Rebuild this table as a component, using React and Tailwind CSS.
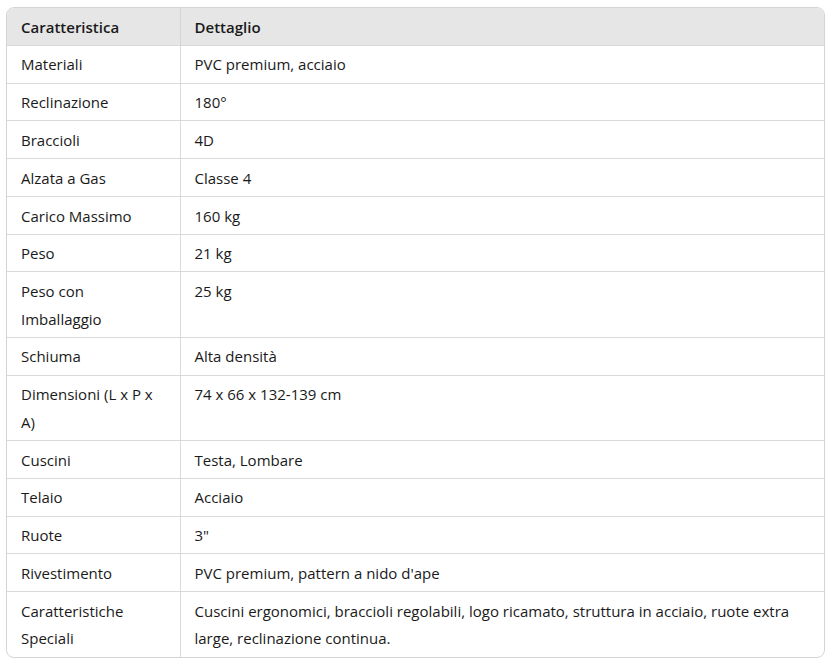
import React from 'react';

const rows = [
  ['Materiali', 'PVC premium, acciaio'],
  ['Reclinazione', '180°'],
  ['Braccioli', '4D'],
  ['Alzata a Gas', 'Classe 4'],
  ['Carico Massimo', '160 kg'],
  ['Peso', '21 kg'],
  ['Peso con Imballaggio', '25 kg'],
  ['Schiuma', 'Alta densità'],
  ['Dimensioni (L x P x A)', '74 x 66 x 132-139 cm'],
  ['Cuscini', 'Testa, Lombare'],
  ['Telaio', 'Acciaio'],
  ['Ruote', '3"'],
  ['Rivestimento', 'PVC premium, pattern a nido d\'ape'],
  [
    'Caratteristiche Speciali',
    'Cuscini ergonomici, braccioli regolabili, logo ricamato, struttura in acciaio, ruote extra large, reclinazione continua.',
  ],
];

const App = () => {
  return (
    <div className="bg-white min-h-[664px] pt-[7px] pl-[6px] pr-[6px] font-['Open_Sans',sans-serif] text-[15px] text-[#1a1a1a]">
      <div className="w-[819px] border border-[#d4d4d4] rounded-lg overflow-hidden">
        <table className="w-full table-fixed border-collapse">
          <thead>
            <tr className="bg-[#e6e6e6]">
              <th className="w-[173px] text-left font-semibold px-[14px] pt-[5.6px] pb-[3.6px] leading-[27.6px] border-r border-[#d4d4d4]">
                Caratteristica
              </th>
              <th className="text-left font-semibold px-[14px] pt-[5.6px] pb-[3.6px] leading-[27.6px]">Dettaglio</th>
            </tr>
          </thead>
          <tbody>
            {rows.map(([k, v]) => (
              <tr key={k} className="border-t border-[#d9d9d9]">
                <td className="align-top px-[14px] pt-[5.6px] pb-[3.6px] leading-[27.6px] border-r border-[#d9d9d9]">{k}</td>
                <td className="align-top px-[14px] pt-[5.6px] pb-[3.6px] leading-[27.6px]">{v}</td>
              </tr>
            ))}
          </tbody>
        </table>
      </div>
    </div>
  );
};

export default App;
